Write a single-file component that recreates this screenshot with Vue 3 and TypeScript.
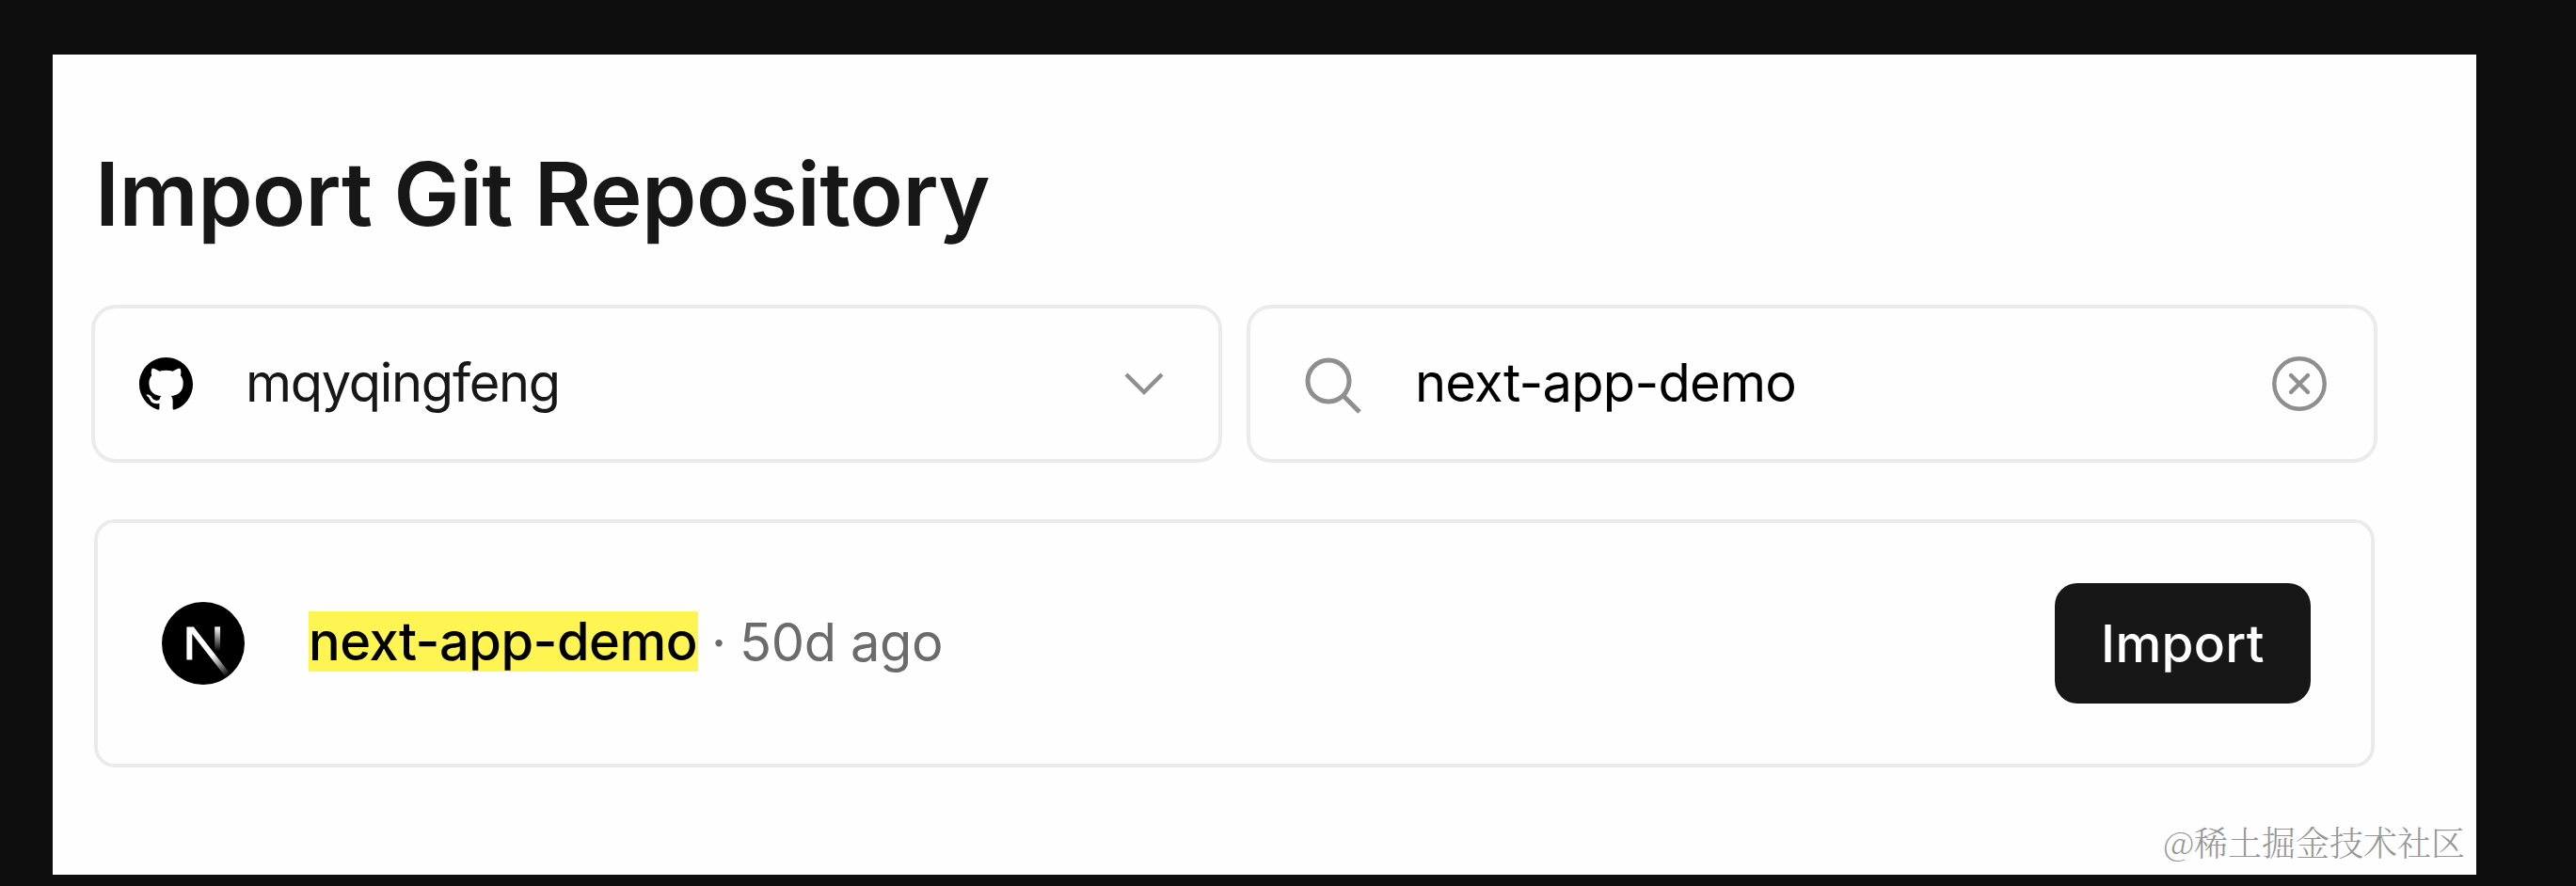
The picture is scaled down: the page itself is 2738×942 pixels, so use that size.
<script setup lang="ts">
interface Repository {
  name: string
  updated: string
}

const account = 'mqyqingfeng'
const query = 'next-app-demo'
const repositories: Repository[] = [{ name: 'next-app-demo', updated: '50d ago' }]
</script>

<template>
  <div class="page">
    <main class="panel">
      <h1 class="title">Import Git Repository</h1>

      <div class="filters">
        <div class="field account">
          <svg class="github" viewBox="0 0 16 16" aria-hidden="true">
            <path
              fill="#000"
              d="M8 0C3.58 0 0 3.58 0 8c0 3.54 2.29 6.53 5.47 7.59.4.07.55-.17.55-.38 0-.19-.01-.82-.01-1.49-2.01.37-2.53-.49-2.69-.94-.09-.23-.48-.94-.82-1.13-.28-.15-.68-.52-.01-.53.63-.01 1.08.58 1.23.82.72 1.21 1.87.87 2.33.66.07-.52.28-.87.51-1.07-1.78-.2-3.64-.89-3.64-3.95 0-.87.31-1.59.82-2.15-.08-.2-.36-1.02.08-2.12 0 0 .67-.21 2.2.82.64-.18 1.32-.27 2-.27s1.36.09 2 .27c1.53-1.04 2.2-.82 2.2-.82.44 1.1.16 1.92.08 2.12.51.56.82 1.27.82 2.15 0 3.07-1.87 3.75-3.65 3.95.29.25.54.73.54 1.48 0 1.07-.01 1.93-.01 2.2 0 .21.15.46.55.38A8.01 8.01 0 0 0 16 8c0-4.42-3.58-8-8-8z"
            />
          </svg>
          <span class="account-name">{{ account }}</span>
          <svg class="chevron" viewBox="0 0 44 26" aria-hidden="true">
            <path d="M3 3l19 19L41 3" />
          </svg>
        </div>

        <div class="field search">
          <svg class="magnifier" viewBox="0 0 62 62" aria-hidden="true">
            <circle cx="26" cy="26" r="22" />
            <path d="M42 42l17 17" />
          </svg>
          <span class="query">{{ query }}</span>
          <svg class="clear" viewBox="0 0 58 58" aria-hidden="true">
            <circle cx="29" cy="29" r="26.7" />
            <path d="M20 20l18 18M38 20l-18 18" />
          </svg>
        </div>
      </div>

      <section v-for="repo in repositories" :key="repo.name" class="repo">
        <svg class="next" viewBox="0 0 180 180" aria-hidden="true">
          <defs>
            <linearGradient id="slash" x1="109" y1="116.5" x2="144.5" y2="160.5" gradientUnits="userSpaceOnUse">
              <stop stop-color="#fff" />
              <stop offset="1" stop-color="#fff" stop-opacity="0" />
            </linearGradient>
            <linearGradient id="bar" x1="121" y1="54" x2="120.8" y2="106.9" gradientUnits="userSpaceOnUse">
              <stop stop-color="#fff" />
              <stop offset="1" stop-color="#fff" stop-opacity="0" />
            </linearGradient>
          </defs>
          <circle cx="90" cy="90" r="90" fill="#000" />
          <path
            fill="url(#slash)"
            d="M149.508 157.52L69.142 54H54v71.97h12.114V69.384l73.885 95.461a90.3 90.3 0 0 0 9.509-7.325z"
          />
          <rect x="115" y="54" width="12" height="72" fill="url(#bar)" />
        </svg>
        <mark class="repo-name">{{ repo.name }}</mark>
        <span class="dot">·</span>
        <span class="updated">{{ repo.updated }}</span>
        <button class="import" type="button">Import</button>
      </section>

      <footer class="watermark">@稀土掘金技术社区</footer>
    </main>
  </div>
</template>

<style>
body {
  margin: 0;
  background: #0e0e0e;
}
</style>

<style scoped>
.page {
  box-sizing: border-box;
  width: 2738px;
  height: 942px;
  padding: 58px 106px 12px 56px;
  background: #0e0e0e;
  font-family: Inter, 'Liberation Sans', sans-serif;
  overflow: hidden;
}

.panel {
  box-sizing: border-box;
  display: flex;
  flex-direction: column;
  height: 872px;
  padding: 92px 105px 0 41px;
  background: #fefefe;
}

.title {
  height: 112px;
  margin: 0 0 62px;
  padding-left: 4px;
  color: #171717;
  font-size: 93.5px;
  font-weight: 600;
  letter-spacing: -0.45px;
  line-height: 112px;
  white-space: nowrap;
}

.filters {
  display: flex;
  gap: 26px;
  height: 168px;
}

.field {
  box-sizing: border-box;
  display: flex;
  align-items: center;
  width: 1202px;
  height: 168px;
  border: 4px solid #ebebeb;
  border-radius: 26px;
  font-size: 56px;
  line-height: 68px;
  white-space: nowrap;
}

.account {
  padding: 0 57px 0 47px;
}

.search {
  padding: 0 50px 0 57px;
}

.github {
  width: 57px;
  height: 57px;
  margin-right: 56px;
}

.account-name {
  padding-bottom: 2px;
  color: #171717;
  letter-spacing: -1.3px;
}

.chevron {
  width: 44px;
  height: 26px;
  margin-left: auto;
}

.magnifier {
  width: 62px;
  height: 62px;
  margin: 3px 56px 0 0;
}

.query {
  padding-bottom: 2px;
  color: #000;
  letter-spacing: -0.72px;
}

.clear {
  width: 58px;
  height: 58px;
  margin-left: auto;
}

.chevron,
.magnifier,
.clear {
  fill: none;
  stroke: #8f8f8f;
  stroke-width: 4.4;
}

.magnifier {
  stroke-width: 5;
}

.clear {
  stroke-linecap: round;
}

.repo {
  box-sizing: border-box;
  display: flex;
  align-items: center;
  width: 2424px;
  height: 264px;
  margin: 60px 0 0 3px;
  padding: 0 64px 0 68px;
  border: 4px solid #ebebeb;
  border-radius: 22px;
  font-size: 56px;
  line-height: 64px;
  white-space: nowrap;
}

.next {
  width: 88px;
  height: 88px;
  margin-right: 68px;
}

.repo-name {
  box-sizing: border-box;
  width: 414px;
  height: 64px;
  margin-bottom: 4px;
  background: #fff552;
  color: #000;
  font-weight: 500;
  letter-spacing: -0.5px;
}

.dot,
.updated {
  margin-bottom: 3px;
  color: #6b6b6b;
}

.dot {
  width: 44px;
  text-align: center;
}

.updated {
  letter-spacing: -0.35px;
}

.import {
  width: 272px;
  height: 128px;
  margin-left: auto;
  padding: 0;
  border: 0;
  border-radius: 24px;
  background: #171717;
  color: #fff;
  font: 500 55px/68px Inter, 'Liberation Sans', sans-serif;
  letter-spacing: 0.3px;
}

.watermark {
  align-self: flex-end;
  margin: 53px -93px 0 0;
  color: #969696;
  font-family: 'Noto Serif CJK SC', 'Noto Sans CJK SC', sans-serif;
  font-size: 36px;
  font-weight: 300;
  line-height: 52px;
  white-space: nowrap;
}
</style>
